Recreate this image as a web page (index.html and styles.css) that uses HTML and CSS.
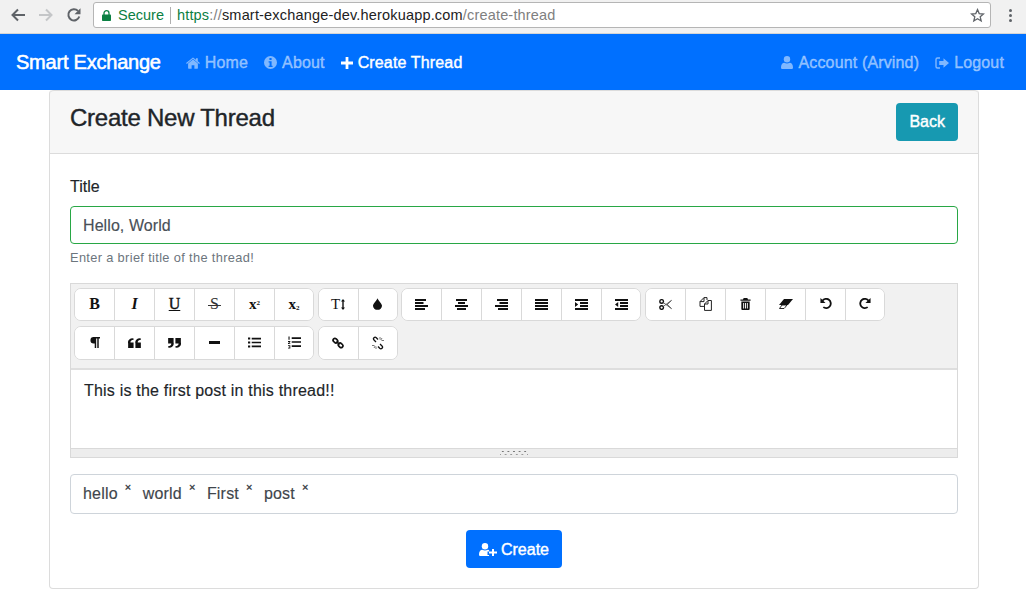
FILE: index.html
```html
<!DOCTYPE html>
<html lang="en">
<head>
<meta charset="utf-8">
<title>Smart Exchange</title>
<link rel="stylesheet" href="styles.css">
</head>
<body>
<div class="chrome">
  <svg class="cicon" width="16" height="16" viewBox="0 0 16 16"><path d="M15 8H3M8 2.500 2.500 8 8 13.500" fill="none" stroke="#5f6368" stroke-width="2"/></svg>
  <svg class="cicon" width="16" height="16" viewBox="0 0 16 16"><path d="M1 8h12M8 2.500 13.500 8 8 13.500" fill="none" stroke="#c4c6c8" stroke-width="2"/></svg>
  <svg class="cicon" width="16" height="16" viewBox="0 0 16 16"><path d="M13.300 9.500A5.600 5.600 0 1 1 12 3.900" fill="none" stroke="#5f6368" stroke-width="2"/><path d="M14.500 1.200v6h-6z" fill="#5f6368"/></svg>
  <div class="omnibox">
    <svg width="9" height="11" viewBox="0 0 9 11" class="lock"><path d="M2 5V3.200a2.500 2.500 0 0 1 5 0V5" fill="none" stroke="#0b8043" stroke-width="1.300"/><rect y="4.600" width="9" height="6.400" rx=".8" fill="#0b8043"/></svg>
    <span class="secure">Secure</span><span class="sep"></span>
    <span class="url"><span class="https">https</span><span class="dim">://</span>smart-exchange-dev.herokuapp.com<span class="dim">/create-thread</span></span>
    <svg class="star" width="15" height="15" viewBox="0 0 15 15"><path d="M7.500 1.600 9.200 5.600l4.300.4-3.300 2.800 1 4.200-3.700-2.200-3.700 2.200 1-4.200L1.500 6l4.300-.4z" fill="none" stroke="#5f6368" stroke-width="1.300"/></svg>
  </div>
  <div class="dots"><i></i><i></i><i></i></div>
</div>

<nav class="navbar">
  <a class="brand">Smart Exchange</a>
  <a class="nav-link">
    <svg width="14" height="12" viewBox="0 0 15 13"><path d="M7.500 2.600 2.200 7v5a.6.6 0 0 0 .6.6h3.200V9h3v3.600h3.200a.6.6 0 0 0 .6-.6V7z M7.500.5 0 6.600l.8.900L7.500 2l6.700 5.500.8-.9-2.300-1.900V1.300h-2v1.700z" fill="currentColor"/></svg>Home</a>
  <a class="nav-link">
    <svg width="13" height="13" viewBox="0 0 13 13"><path fill-rule="evenodd" d="M6.500 0a6.500 6.500 0 1 0 0 13 6.500 6.500 0 0 0 0-13zM5.400 2h2.200v1.900H5.400zM4.600 5.200h3v4.500h1v1.300H4.600V9.700h1V6.500h-1z" fill="currentColor"/></svg>About</a>
  <a class="nav-link active">
    <svg width="12" height="12" viewBox="0 0 13 13"><path d="M5 0h3v5h5v3H8v5H5V8H0V5h5z" fill="currentColor"/></svg>Create Thread</a>
  <span class="spacer"></span>
  <a class="nav-link">
    <svg width="12" height="13" viewBox="0 0 12 13"><circle cx="6" cy="3.300" r="3.200" fill="currentColor"/><path d="M0 11.500C0 8.500 1.500 6.800 3.300 6.800c.8.500 1.700.8 2.700.8s1.900-.3 2.700-.8c1.800 0 3.300 1.700 3.300 4.700 0 1-.7 1.500-1.500 1.500h-9C.7 13 0 12.500 0 11.500z" fill="currentColor"/></svg>Account (Arvind)</a>
  <a class="nav-link">
    <svg width="14" height="12" viewBox="0 0 14 12"><path d="M5 1H2.500A1.500 1.500 0 0 0 1 2.500v7A1.500 1.500 0 0 0 2.500 11H5" fill="none" stroke="currentColor" stroke-width="1.400"/><path d="M8.500 1.300 14 6l-5.500 4.700V8H4.200V4h4.300z" fill="currentColor"/></svg>Logout</a>
</nav>

<main class="card">
  <header class="card-header">
    <h1>Create New Thread</h1>
    <button class="btn btn-info">Back</button>
  </header>
  <div class="card-body">
    <label class="label">Title</label>
    <div class="input valid">Hello, World</div>
    <small class="help">Enter a brief title of the thread!</small>

    <div class="editor">
      <div class="toolbar">
        <div class="group">
          <button class="tb txt b">B</button><button class="tb txt i">I</button><button class="tb txt u">U</button><button class="tb txt s"><span>S</span></button><button class="tb txt sc"><span>x<sup>2</sup></span></button><button class="tb txt sc"><span>x<sub>2</sub></span></button>
        </div>
        <div class="group">
          <button class="tb txt th">T<svg width="4" height="11" viewBox="0 0 4 11"><path d="M2 0l2 2.500H2.700v6H4L2 11 0 8.500h1.300v-6H0z" fill="#111"/></svg></button>
          <button class="tb"><svg width="9" height="12" viewBox="0 0 10 13"><path d="M5 0c.6 2.300 5 6 5 8.500A5 4.500 0 0 1 0 8.500C0 6 4.400 2.300 5 0z" fill="#111"/></svg></button>
        </div>
        <div class="group">
          <button class="tb"><svg width="13" height="11" viewBox="0 0 13 11"><path d="M0 0h11v2H0zM0 3h8.500v2H0zM0 6h13v2H0zM0 9h10v2H0z" fill="#111"/></svg></button>
          <button class="tb"><svg width="13" height="11" viewBox="0 0 13 11"><path d="M1 0h11v2H1zM3 3h7v2H3zM0 6h13v2H0zM2 9h9v2H2z" fill="#111"/></svg></button>
          <button class="tb"><svg width="13" height="11" viewBox="0 0 13 11"><path d="M2 0h11v2H2zM4.500 3H13v2H4.500zM0 6h13v2H0zM3 9h10v2H3z" fill="#111"/></svg></button>
          <button class="tb"><svg width="13" height="11" viewBox="0 0 13 11"><path d="M0 0h13v2H0zM0 3h13v2H0zM0 6h13v2H0zM0 9h13v2H0z" fill="#111"/></svg></button>
          <button class="tb"><svg width="13" height="11" viewBox="0 0 13 11"><path d="M0 0h13v2H0zM5 3h8v2H5zM5 6h8v2H5zM0 9h13v2H0zM0 3l3.200 2.500L0 8z" fill="#111"/></svg></button>
          <button class="tb"><svg width="13" height="11" viewBox="0 0 13 11"><path d="M0 0h13v2H0zM5 3h8v2H5zM5 6h8v2H5zM0 9h13v2H0zM3.200 3 0 5.500 3.200 8z" fill="#111"/></svg></button>
        </div>
        <div class="group">
          <button class="tb"><svg width="13" height="11" viewBox="0 0 14 12"><circle cx="2.800" cy="2.700" r="2" fill="none" stroke="#111" stroke-width="1.500"/><circle cx="2.800" cy="9.300" r="2" fill="none" stroke="#111" stroke-width="1.500"/><path d="M4.500 3.800 13.500 10.500 8.500 5.500M4.500 8.200 13.500 1.500 8.500 6.500" stroke="#555" fill="none"/></svg></button>
          <button class="tb"><svg width="13" height="14" viewBox="0 0 13 14"><path d="M5 .6 1 4.600v4.800h4M5 .6v4H1M8 3V.6H5M9 3.500 5.500 7v6.400H12.400V3.500zM9 3.500V7H5.500" fill="none" stroke="#222" stroke-width="1"/></svg></button>
          <button class="tb"><svg width="11" height="12" viewBox="0 0 11 13"><path fill-rule="evenodd" d="M3.500 0h4l.7 1.600H11V3H0V1.600h2.800zM1 3.800h9V12a1 1 0 0 1-1 1H2a1 1 0 0 1-1-1zM3 5.500v5.800h1V5.500zM5 5.500v5.800h1V5.500zM7 5.500v5.800h1V5.500z" fill="#111"/></svg></button>
          <button class="tb"><svg width="14" height="10" viewBox="0 0 14 10"><path d="M5 0h9L9 6H0z" fill="#111"/><path d="M.5 9.500 3 6h5L6 8.500 5 9.500z" fill="#fff" stroke="#111" stroke-width=".9"/></svg></button>
          <button class="tb"><svg width="12" height="12" viewBox="0 0 13 13"><path d="M3.600 9.900A5 5 0 1 0 2.600 3" fill="none" stroke="#111" stroke-width="2"/><path d="M.5 0v5.500H6z" fill="#111"/></svg></button>
          <button class="tb"><svg width="12" height="12" viewBox="0 0 13 13"><path d="M9.400 9.900A5 5 0 1 1 10.400 3" fill="none" stroke="#111" stroke-width="2"/><path d="M12.500 0v5.500H7z" fill="#111"/></svg></button>
        </div>
        <div class="group">
          <button class="tb"><svg width="10" height="11" viewBox="0 0 11 12"><path fill-rule="evenodd" d="M4 0h7v1.600H9.600V12H8V1.600H6.800V12H5.200V7H4A3.500 3.500 0 0 1 4 0z" fill="#111"/></svg></button>
          <button class="tb"><svg width="13" height="10" viewBox="0 0 14 11"><path d="M0 6a5 4.500 0 0 1 6-5.500V2C4 2 2.500 3 2.500 5h3.500v6H0zM8 6a5 4.500 0 0 1 6-5.500V2c-2 0-3.500 1-3.500 3H14v6H8z" fill="#111"/></svg></button>
          <button class="tb"><svg width="13" height="10" viewBox="0 0 14 11"><path d="M6 5a5 4.500 0 0 1-6 5.500V9c2 0 3.500-1 3.500-3H0V0h6zM14 5a5 4.500 0 0 1-6 5.500V9c2 0 3.500-1 3.500-3H8V0h6z" fill="#111"/></svg></button>
          <button class="tb"><svg width="11" height="3" viewBox="0 0 11 3"><rect width="11" height="3" fill="#111"/></svg></button>
          <button class="tb"><svg width="13" height="11" viewBox="0 0 14 11"><path d="M0 0h2.400v2.400H0zM0 4.300h2.400v2.400H0zM0 8.600h2.400V11H0zM4 .4h10v1.800H4zM4 4.600h10v1.800H4zM4 8.800h10v1.800H4z" fill="#111"/></svg></button>
          <button class="tb"><svg width="13" height="13" viewBox="0 0 14 13"><path d="M.5 0h1.200v3.500H.5zM0 5h2.500v.9L1 7.300h1.500v.8H0v-.8l1.500-1.400H0zM0 9.500h2.500v3.500H0v-.8h1.600v-.5H.6v-.7h1v-.6H0zM4 .8h10v1.800H4zM4 5.100h10v1.800H4zM4 9.500h10v1.800H4z" fill="#111"/></svg></button>
        </div>
        <div class="group">
          <button class="tb"><svg width="12" height="12" viewBox="0 0 12 12"><g fill="none" stroke="#111" stroke-width="1.700"><rect x=".9" y="1.900" width="5" height="3.600" rx="1.800" transform="rotate(45 3.400 3.700)"/><rect x="6.100" y="6.500" width="5" height="3.600" rx="1.800" transform="rotate(45 8.600 8.300)"/><path d="M4.500 4.500l3 3"/></g></svg></button>
          <button class="tb"><svg width="14" height="14" viewBox="0 0 14 14"><g fill="none" stroke="#111" stroke-width="1.300"><path d="M5 6 3 4a1.600 1.600 0 0 1 2.300-2.300L7 3.500"/><path d="M9 8l2 2a1.600 1.600 0 0 1-2.300 2.300L7 10.500"/></g><path d="M9 1v2.500M11 2 9.800 4M13 4.500h-2.500M1 9.500h2.500M3 12l1.200-2M5 13v-2.500" stroke="#666" stroke-width=".9"/></svg></button>
        </div>
      </div>
      <div class="editor-text">This is the first post in this thread!!</div>
      <div class="resize"><span class="grip"></span></div>
    </div>

    <div class="tags">
      <span class="tag">hello<span class="close">×</span></span><span class="tag">world<span class="close">×</span></span><span class="tag">First<span class="close">×</span></span><span class="tag">post<span class="close">×</span></span>
    </div>

    <div class="actions">
      <button class="btn btn-primary"><svg width="18" height="13" viewBox="0 0 18 13"><circle cx="6" cy="3.300" r="3.200" fill="#fff"/><path d="M0 11.500C0 8.500 1.500 6.800 3.300 6.800c.8.500 1.700.8 2.700.8s1.900-.3 2.700-.8c.5 0 1 .1 1.400.4V8.500H8.500v3.500h1.600V13H1.500C.7 13 0 12.500 0 11.500z" fill="#fff"/><path d="M13 6h2v2.500h3v2h-3V13h-2v-2.500h-3v-2h3z" fill="#fff"/></svg>Create</button>
    </div>
  </div>
</main>
</body>
</html>
```
FILE: styles.css
```css
* { box-sizing: border-box; }
html, body { margin: 0; padding: 0; }
body {
  width: 1026px;
  height: 612px;
  overflow: hidden;
  background: #fff;
  color: #212529;
  font-family: "Liberation Sans", Arial, sans-serif;
  font-size: 16px;
}
button { font-family: inherit; }

.chrome {
  height: 34px;
  background: #f1f1f1;
  border-bottom: 1px solid #d5d5d5;
  display: flex;
  align-items: center;
  padding: 0 0 3px 10px;
}
.cicon { margin-right: 12px; flex: none; }
.omnibox {
  width: 898px;
  height: 26px;
  margin-left: -1px;
  background: #fff;
  border: 1px solid #b5b5b5;
  border-radius: 3px;
  display: flex;
  align-items: center;
  padding: 0 5px 0 8px;
  font-size: 14.500px;
  color: #222;
}
.lock { flex: none; margin-right: 7px; }
.secure { color: #0b8043; }
.sep { width: 1px; height: 17px; background: #b0b0b0; margin: 0 6px; }
.https { color: #0b8043; }
.dim { color: #808080; }
.url { letter-spacing: .18px; }
.star { margin-left: auto; }
.dots { display: flex; flex-direction: column; gap: 2px; margin-left: 18px; }
.dots i { display: block; width: 3px; height: 3px; border-radius: 50%; background: #5f6368; }

.navbar {
  height: 56px;
  background: #0070ff;
  display: flex;
  align-items: center;
  padding: 0 14px 0 16px;
}
.brand { color: #fff; font-size: 20px; -webkit-text-stroke: .55px #fff; letter-spacing: -.22px; margin-right: 17px; }
.nav-link {
  color: rgba(255,255,255,.5);
  padding: 1px 8px 0;
  font-size: 16px;
  letter-spacing: .15px;
  -webkit-text-stroke: .4px;
  display: flex;
  align-items: center;
  gap: 5px;
}
.nav-link.active { color: #fff; }
.spacer { flex: 1; }

.card {
  width: 930px;
  height: 499px;
  margin-left: 49px;
  border: 1px solid #dcdcdc;
  border-top: 0;
  border-radius: 4px;
}
.card-header {
  height: 64px;
  background: #f7f7f7;
  border: 0 solid #dcdcdc;
  border-top-width: 1px;
  border-bottom-width: 1px;
  border-radius: 4px 4px 0 0;
  display: flex;
  justify-content: space-between;
  padding: 12px 20px;
}
h1 { margin: 0; font-size: 24px; font-weight: 400; -webkit-text-stroke: .4px; letter-spacing: -.25px; line-height: 29px; color: #212529; }
.btn {
  border: 0;
  border-radius: 4px;
  color: #fff;
  font-size: 16px;
  -webkit-text-stroke: .4px #fff;
  height: 38px;
  padding: 0 13px;
}
.btn-info { background: #1799b1; }
.btn-primary { background: #0070ff; display: flex; align-items: center; gap: 4px; padding-top: 1px; }

.card-body { padding: 23px 20px 0; display: flex; flex-direction: column; }
.label { line-height: 19px; margin-bottom: 10px; -webkit-text-stroke: .15px; }
.input {
  height: 38px;
  border: 1px solid #28a745;
  border-radius: 4px;
  padding: 1px 12px 0;
  line-height: 36px;
  color: #495057;
  letter-spacing: .08px;
  -webkit-text-stroke: .15px;
}
.help { font-size: 12.800px; color: #6c757d; margin-top: 6px; line-height: 15px; letter-spacing: .35px; }

.editor {
  margin-top: 18px;
  border: 1px solid #d9d9d9;
  height: 175px;
  display: flex;
  flex-direction: column;
}
.toolbar {
  height: 86px;
  background: #f1f1f1;
  border-bottom: 2px solid #dedede;
  padding: 3.500px 0 0 3px;
  display: flex;
  flex-wrap: wrap;
  align-content: flex-start;
  gap: 5px 3.700px;
}
.group {
  display: flex;
  height: 33.500px;
  background: #fff;
  border: 1px solid #d9d9d9;
  border-radius: 7px;
  overflow: hidden;
}
.tb {
  width: 40px;
  height: 100%;
  margin: 0;
  padding: 0;
  background: #fff;
  border: 0;
  border-left: 1px solid #d9d9d9;
  display: flex;
  align-items: center;
  justify-content: center;
  color: #111;
}
.tb:first-child { border-left: 0; width: 39px; }
.tb:last-child { width: 39px; }
.txt { font-family: "Liberation Serif", serif; font-size: 16px; font-weight: 700; }
.i { font-style: italic; }
.u { text-decoration: underline; font-weight: 400; -webkit-text-stroke: .4px; }
.s { font-weight: 400; color: #333; }
.s span { padding: 0 2px; background: linear-gradient(#333, #333) center 56% / 100% 1px no-repeat; }
.sc { font-size: 15px; }
.sc sup, .sc sub { font-size: 7px; line-height: 0; vertical-align: baseline; position: relative; }
.sc sup { top: -4px; }
.sc sub { top: 1px; }
.th { font-weight: 400; font-size: 15px; gap: 1px; }

.editor-text { height: 78px; padding: 11px 13px; line-height: 19px; background: #fff; letter-spacing: .2px; -webkit-text-stroke: .15px; }
.resize {
  flex: 1;
  background: #ededed;
  border-top: 1px solid #d9d9d9;
  display: flex;
  justify-content: center;
}
.grip {
  width: 28px;
  height: 6px;
  margin-top: 1px;
  background:
    radial-gradient(circle, #777 .9px, transparent 1.100px) 0 0 / 5.600px 3px,
    radial-gradient(circle, #999 .8px, transparent 1px) 2.800px 3px / 5.600px 3px;
  background-repeat: repeat-x;
}

.tags {
  margin-top: 16px;
  height: 40px;
  border: 1px solid #ced4da;
  border-radius: 4px;
  padding: 0 12px;
  display: flex;
  align-items: center;
  gap: 11.300px;
  color: #3f464c;
  letter-spacing: .2px;
  -webkit-text-stroke: .15px;
}
.tag { display: flex; }
.close { font-size: 11px; font-weight: 700; line-height: 10px; margin: -3.500px 0 0 7px; height: 10px; -webkit-text-stroke: 0; }

.actions { display: flex; justify-content: center; margin-top: 16px; }
```
